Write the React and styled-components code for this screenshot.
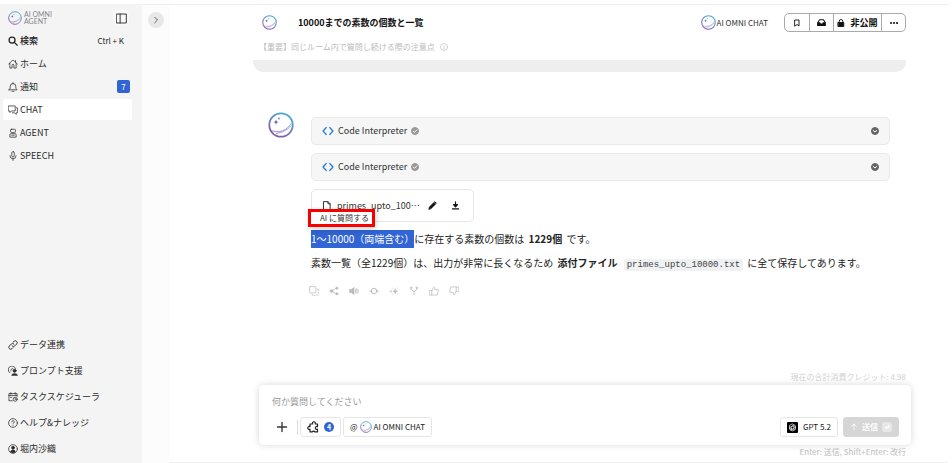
import { useId } from "react";
import styled, { createGlobalStyle } from "styled-components";

const GlobalStyle = createGlobalStyle`
  * {
    box-sizing: border-box;
  }

  body {
    margin: 0;
    background: #fff;
    color: #333;
    font-family: "Noto Sans CJK JP", sans-serif;
    font-size: 9px;
    line-height: 14px;
  }

  button,
  textarea {
    font: inherit;
    color: inherit;
  }

  svg {
    display: block;
    flex-shrink: 0;
  }
`;

const Shell = styled.div`
  display: flex;
  min-height: 100vh;
  padding: 4px 4px 0 0;
`;

/* Sidebar */

const Sidebar = styled.aside`
  display: flex;
  flex-direction: column;
  width: 142px;
  flex-shrink: 0;
  padding: 4px 10px 3px 3px;
  background: #f4f4f4;
`;

const SidebarTop = styled.div`
  display: flex;
  align-items: center;
  justify-content: space-between;
  height: 20px;
  padding: 0 3px 0 5px;
  margin-bottom: 2px;
`;

const Logo = styled.a`
  display: flex;
  align-items: center;
  gap: 2px;
  color: #85858f;
  font-family: Lato, sans-serif;
  font-size: 7px;
  line-height: 7px;
  text-decoration: none;
`;

const PlainButton = styled.button`
  display: flex;
  align-items: center;
  justify-content: center;
  padding: 0;
  border: 0;
  background: none;
  cursor: pointer;
`;

const CollapseButton = styled(PlainButton)`
  width: 16px;
  height: 16px;
  border-radius: 4px;
  background: #f8f8f8;
`;

const SearchButton = styled(PlainButton)`
  justify-content: flex-start;
  gap: 2px;
  height: 22px;
  margin-bottom: 1px;
  padding: 0 8px 0 5px;
  color: #222;
  font-weight: 500;
`;

const Shortcut = styled.span`
  margin-left: auto;
  font-size: 8px;
  font-weight: 400;
`;

const Nav = styled.nav`
  display: flex;
  flex-direction: column;
  gap: ${(props) => (props.$loose ? "4px" : "2px")};
  ${(props) => props.$loose && "margin-top: auto;"}
`;

const NavLink = styled.a`
  display: flex;
  align-items: center;
  gap: 2px;
  height: ${(props) => (props.$tall ? "22px" : "21px")};
  padding: 0 2px 0 5px;
  border-radius: 2px;
  background: ${(props) => (props.$active ? "#fff" : "transparent")};
  color: #2b2b2b;
  text-decoration: none;
`;

const Count = styled.span`
  width: 13px;
  height: 13px;
  margin-left: auto;
  border-radius: 2px;
  background: #3164d4;
  color: #fff;
  font-size: 8px;
  line-height: 13px;
  text-align: center;
`;

const Rail = styled.div`
  width: 28px;
  flex-shrink: 0;
  padding: 7px 6px;
  border-top: 1px solid #efefef;
  background: #fcfcfc;
`;

const RailButton = styled(PlainButton)`
  width: 16px;
  height: 16px;
  border-radius: 50%;
  background: #e8e8e8;
  color: #555;
`;

/* Main */

const Main = styled.main`
  display: flex;
  flex: 1;
  flex-direction: column;
  min-width: 0;
  padding: 0 37px 3px 83px;
  border-top: 1px solid #efefef;
  border-bottom: 1px solid #efefef;
`;

const Header = styled.header`
  display: flex;
  align-items: center;
  padding: 8px 5px 0 9px;
`;

const Title = styled.h1`
  margin: 0 auto 0 21px;
  color: #111;
  font-size: 9px;
  font-weight: 700;
`;

const AgentName = styled.span`
  display: flex;
  align-items: center;
  gap: 1px;
  margin-right: 16px;
  font-size: 8px;
`;

const Actions = styled.div`
  display: flex;
  height: 19px;
  border: 1px solid #aaa;
  border-radius: 5px;
`;

const Action = styled(PlainButton)`
  width: ${(props) => (props.$wide ? "48px" : "24px")};
  gap: 5px;
  color: #111;
  font-weight: 700;

  & + & {
    border-left: 1px solid #aaa;
  }
`;

const Notice = styled.p`
  display: flex;
  align-items: center;
  gap: 5px;
  margin: 8px 0 6px 6px;
  color: #bbb;
  font-size: 8px;
`;

const Strip = styled.div`
  height: 12px;
  margin-right: 5px;
  border-radius: 0 0 10px 10px;
  background: #eee;
`;

const Message = styled.article`
  display: flex;
  flex: 1;
  align-items: flex-start;
  gap: 17px;
  padding: 40px 21px 0 15px;
`;

const MessageBody = styled.div`
  display: flex;
  flex: 1;
  flex-direction: column;
  min-width: 0;
  padding-top: 5px;
`;

const Panel = styled.button`
  display: flex;
  align-items: center;
  gap: 4px;
  height: 28px;
  margin-bottom: 8px;
  padding: 0 10px;
  border: 1px solid #e9e9e9;
  border-radius: 5px;
  background: #f6f6f6;
  cursor: pointer;
`;

const PanelToggle = styled.span`
  margin-left: auto;
`;

const FileCard = styled.div`
  position: relative;
  display: flex;
  align-items: center;
  width: 163px;
  height: 33px;
  margin-bottom: 2px;
  padding: 0 13px 0 10px;
  border: 1px solid #e6e6e6;
  border-radius: 5px;
`;

const FileName = styled.span`
  margin: 0 auto 0 5px;
`;

const FileTools = styled.div`
  display: flex;
  gap: 13px;
`;

const FileButton = styled(PlainButton)`
  width: 10px;
  height: 10px;
  color: #111;
`;

const AskPopup = styled.button`
  position: absolute;
  top: 19px;
  left: -4px;
  width: 67px;
  height: 18px;
  padding: 0 0 0 6px;
  border: 3px solid #f60000;
  background: #fff;
  box-shadow: 1px 3px 6px rgba(0, 0, 0, 0.16);
  font-size: 8px;
  line-height: 12px;
  white-space: nowrap;
`;

const Answer = styled.p`
  margin: 6px 0 0;
  color: #222;
  font-size: 10px;
  line-height: 18px;

  mark {
    display: inline-block;
    background: #3164d4;
    color: #fff;
  }

  strong {
    margin: 0 2px;
  }

  code {
    margin: 0 2px;
    padding: 1px 3px;
    border-radius: 2px;
    background: #f0f1f3;
    color: #444;
    font-family: "Liberation Mono", monospace;
    font-size: 9px;
  }
`;

const Reactions = styled.div`
  display: flex;
  gap: 10px;
  margin: 12px 0 0 -2px;
  color: #bbb;
`;

const IconButton = styled(PlainButton)`
  width: 10px;
  height: 10px;
`;

/* Composer */

const Note = styled.p`
  margin: 0 5px 0 0;
  color: ${(props) => (props.$faint ? "#d2d2d2" : "#bbb")};
  font-size: 8px;
  line-height: ${(props) => (props.$faint ? "16px" : "14px")};
  text-align: right;
`;

const Composer = styled.form`
  display: flex;
  flex-direction: column;
  justify-content: space-between;
  height: 60px;
  margin-left: 6px;
  padding: 10px 12px 8px 13px;
  border-radius: 5px;
  background: #fff;
  box-shadow: 0 0 7px rgba(0, 0, 0, 0.16);
`;

const Prompt = styled.textarea`
  display: block;
  width: 100%;
  height: 14px;
  padding: 0;
  border: 0;
  outline: 0;
  resize: none;
  overflow: hidden;

  &::placeholder {
    color: #999;
  }
`;

const Tools = styled.div`
  display: flex;
  align-items: center;
  gap: 2px;
`;

const Divider = styled.span`
  width: 1px;
  height: 15px;
  margin-left: 3px;
  background: #ddd;
`;

const AddButton = styled(PlainButton)`
  width: 20px;
  height: 20px;
`;

const ToolButton = styled(PlainButton)`
  gap: 5px;
  height: 20px;
  padding: 0 6px;
  border: 1px solid #e6e6e6;
  border-radius: 3px;
  color: #222;
  font-size: 8px;
`;

const AgentButton = styled(ToolButton)`
  gap: 2px;
`;

const ModelButton = styled(ToolButton)`
  margin: 0 3px 0 auto;
`;

const ToolCount = styled.span`
  width: 10px;
  height: 10px;
  border-radius: 50%;
  background: #3164d4;
  color: #fff;
  font-size: 7px;
  font-weight: 700;
  line-height: 10px;
`;

const SendButton = styled(ToolButton)`
  gap: 4px;
  border-color: #d6d6d6;
  background: #d6d6d6;
  color: #fff;
  font-weight: 700;
`;

const Svg = ({ size = 10, view = 16, width = 1.2, children }) => (
  <svg
    width={size}
    height={size}
    viewBox={`0 0 ${view} ${view}`}
    fill="none"
    stroke="currentColor"
    strokeWidth={width}
    strokeLinecap="round"
    strokeLinejoin="round"
    aria-hidden="true"
  >
    {children}
  </svg>
);

const Orb = ({ size }) => {
  const id = useId();
  return (
    <svg width={size} height={size} viewBox="0 0 26 26" fill="none" aria-hidden="true">
      <defs>
        <linearGradient id={id} x1="20" y1="1" x2="8" y2="25" gradientUnits="userSpaceOnUse">
          <stop offset="0" stopColor="#35b6cf" />
          <stop offset="0.5" stopColor="#6c82bd" />
          <stop offset="1" stopColor="#8a58ad" />
        </linearGradient>
      </defs>
      <circle cx="13" cy="13" r="11.7" stroke={`url(#${id})`} strokeWidth="1.8" />
      <path d="M3 18.500c8 3 16 0 20-7M8 21.500c6-1 11-3 15-8" stroke={`url(#${id})`} strokeWidth="0.7" />
      <path d="M8 7.500l.7 1.900 1.900.7-1.900.7L8 12.700l-.7-1.900-1.900-.7 1.900-.7z" fill="#6657a8" />
      <circle cx="11" cy="6.500" r="0.9" fill="#4a9bc6" />
    </svg>
  );
};

const icons = {
  search: (
    <Svg width={2}>
      <circle cx="6.500" cy="6.500" r="4.800" />
      <path d="M10.200 10.200l4.500 4.500" />
    </Svg>
  ),
  home: (
    <Svg>
      <path d="M1 8l7-6.500L15 8M3 7v7.500h3.500V10a1.500 1.500 0 0 1 3 0v4.500H13V7M12 5V2.500" />
    </Svg>
  ),
  bell: (
    <Svg>
      <path d="M8 1v1.500M1.500 12.500h13L12.500 10V7a4.500 4.500 0 0 0-9 0v3zM6.500 14.800h3" />
    </Svg>
  ),
  chat: (
    <Svg>
      <path d="M1 1.500h10.500v8H5.500L3 12V9.500H1zM13.500 4.500H15v8h-2V15l-2.500-2.500H7" />
    </Svg>
  ),
  agent: (
    <Svg>
      <rect x="4" y="2" width="8" height="5" rx="1.500" />
      <path d="M3 14v-3a2 2 0 0 1 2-2h6a2 2 0 0 1 2 2v3zM6 11.500h4" />
    </Svg>
  ),
  mic: (
    <Svg>
      <rect x="6" y="1" width="4" height="8.500" rx="2" />
      <path d="M3 7.500a5 5 0 0 0 10 0M8 12.500V15" />
    </Svg>
  ),
  link: (
    <Svg width={1.5}>
      <path d="M6.500 9.500a3 3 0 0 0 4.300 0l3-3a3 3 0 0 0-4.300-4.300L8 3.700M9.500 6.500a3 3 0 0 0-4.300 0l-3 3a3 3 0 0 0 4.300 4.300L8 12.300" />
    </Svg>
  ),
  prompt: (
    <Svg>
      <path d="M3 11a6 6 0 1 1 9-7M4.500 8a3 3 0 0 1 3-4" />
      <circle cx="10.500" cy="7.500" r="2.500" fill="currentColor" />
      <path d="M6 14.500c0-3 9-3 9 0z" fill="currentColor" />
    </Svg>
  ),
  schedule: (
    <Svg>
      <path d="M7 14H1.500V2.500h13V7M1.500 5.500h13M4.500 1v2.500M11.500 1v2.500M4 8.500h2" />
      <circle cx="11.500" cy="11.500" r="3.300" />
      <path d="M11.500 9.800v2h1.500" />
    </Svg>
  ),
  help: (
    <Svg>
      <circle cx="8" cy="8" r="7" />
      <path d="M6 6.300a2 2 0 1 1 3 1.700c-.7.4-1 .8-1 1.500M8 11.700v.1" />
    </Svg>
  ),
  user: (
    <Svg>
      <circle cx="8" cy="8" r="7" />
      <circle cx="8" cy="6" r="2.300" fill="currentColor" />
      <path d="M4.500 12.500c0-4 7-4 7 0-2 2-5 2-7 0z" fill="currentColor" />
    </Svg>
  ),
  copy: (
    <Svg>
      <rect x="1" y="1" width="10" height="10" rx="1" />
      <path d="M13 5h2v2.500M15 10v2M15 14.500h-2.500M10 15H8M5.500 15H5v-2" />
    </Svg>
  ),
  share: (
    <Svg>
      <path d="M4 8l8-4.500M4 8l8 4.500" />
      <circle cx="4" cy="8" r="2.200" fill="currentColor" />
      <circle cx="12.500" cy="3.500" r="1.700" fill="currentColor" />
      <circle cx="12.500" cy="12.500" r="1.700" fill="currentColor" />
    </Svg>
  ),
  speaker: (
    <Svg>
      <path d="M1 5.500h2.500L8 2.500v11l-4.500-3H1z" fill="currentColor" />
      <path d="M10.500 5v6M12.500 4v8M14.500 5.500v5" />
    </Svg>
  ),
  refresh: (
    <Svg width={1.5}>
      <circle cx="8" cy="8" r="4.500" />
      <path d="M1.500 8h2l1.500 1.500M14.500 8h-2L11 6.500" />
    </Svg>
  ),
  sparkle: (
    <Svg>
      <path d="M10 5l1 2.500L13.500 8.500 11 9.500 10 12 9 9.500 6.500 8.500 9 7.500z" fill="currentColor" />
      <path d="M2 8.500h2M3 7.500v2M6 3.500h.1M14 3.500h.1M6 13h.1M14 13h.1" />
    </Svg>
  ),
  branch: (
    <Svg width={1.4}>
      <path d="M3.500 4v1.500L8 9l4.500-3.500V4M8 9v5" />
      <circle cx="3.500" cy="2.800" r="1.200" />
      <circle cx="12.500" cy="2.800" r="1.200" />
    </Svg>
  ),
  up: (
    <Svg>
      <path d="M1 7h3.500v7.500H1zM4.500 7.500L7.500 2c2.500-.5 2 2.500 1.500 4h6l-1.500 8.500h-9" />
    </Svg>
  ),
  down: (
    <Svg>
      <path d="M15 9h-3.500V1.500H15zM11.500 8.500L8.500 14c-2.500.5-2-2.500-1.500-4H1l1.500-8.500h9" />
    </Svg>
  ),
};

const mainLinks = [
  { icon: "home", label: "ホーム" },
  { icon: "bell", label: "通知", count: 7 },
  { icon: "chat", label: "CHAT", active: true },
  { icon: "agent", label: "AGENT" },
  { icon: "mic", label: "SPEECH" },
];

const bottomLinks = [
  { icon: "link", label: "データ連携" },
  { icon: "prompt", label: "プロンプト支援" },
  { icon: "schedule", label: "タスクスケジューラ" },
  { icon: "help", label: "ヘルプ&ナレッジ" },
  { icon: "user", label: "堀内沙織" },
];

const reactions = [
  ["copy", "コピー"],
  ["share", "共有"],
  ["speaker", "読み上げ"],
  ["refresh", "再生成"],
  ["sparkle", "改善"],
  ["branch", "分岐"],
  ["up", "良い"],
  ["down", "悪い"],
];

const CodePanel = () => (
  <Panel type="button">
    <Svg size={12} width={2}>
      <g stroke="#2d7fd6">
        <path d="M5.500 3.500L1.500 8l4 4.500M10.500 3.500l4 4.500-4 4.500" />
      </g>
    </Svg>
    Code Interpreter
    <Svg size={8} width={2}>
      <circle cx="8" cy="8" r="7" fill="#999" stroke="#999" />
      <path d="M4.500 8.200l2.500 2.300 4.500-4.500" stroke="#fff" />
    </Svg>
    <PanelToggle>
      <Svg size={8} width={2}>
        <circle cx="8" cy="8" r="7" fill="#666" stroke="#666" />
        <path d="M4.500 7L8 10l3.500-3" stroke="#fff" />
      </Svg>
    </PanelToggle>
  </Panel>
);

const App = () => {
  return (
    <>
      <GlobalStyle />
      <Shell>
        <Sidebar>
          <SidebarTop>
            <Logo href="#">
              <Orb size={14} />
              <span>
                AI OMNI
                <br />
                AGENT
              </span>
            </Logo>
            <CollapseButton aria-label="サイドバーを閉じる">
              <Svg size={11} width={1.4}>
                <rect x="1" y="1.500" width="14" height="13" />
                <path d="M6 1.500v13" />
              </Svg>
            </CollapseButton>
          </SidebarTop>
          <SearchButton>
            {icons.search}
            検索
            <Shortcut>Ctrl + K</Shortcut>
          </SearchButton>
          <Nav>
            {mainLinks.map((item) => (
              <NavLink href="#" key={item.label} $active={item.active}>
                {icons[item.icon]}
                {item.label}
                {item.count && <Count>{item.count}</Count>}
              </NavLink>
            ))}
          </Nav>
          <Nav $loose>
            {bottomLinks.map((item) => (
              <NavLink href="#" key={item.label} $tall>
                {icons[item.icon]}
                {item.label}
              </NavLink>
            ))}
          </Nav>
        </Sidebar>
        <Rail>
          <RailButton aria-label="履歴を開く">
            <Svg size={8} width={1.8}>
              <path d="M5.500 2.500L11 8l-5.500 5.500" />
            </Svg>
          </RailButton>
        </Rail>
        <Main>
          <Header>
            <Orb size={15} />
            <Title>10000までの素数の個数と一覧</Title>
            <AgentName>
              <Orb size={15} />
              AI OMNI CHAT
            </AgentName>
            <Actions>
              <Action aria-label="ブックマーク">
                <Svg size={8} width={1.8}>
                  <path d="M4 2h8v12l-4-3-4 3z" />
                </Svg>
              </Action>
              <Action aria-label="受信箱">
                <Svg size={9} width={1.8}>
                  <path d="M1.500 8l3-5h7l3 5v5.500h-13z" />
                  <path d="M1.500 8.500h3.500l1 2h4l1-2h3.500v5h-13z" fill="currentColor" />
                </Svg>
              </Action>
              <Action $wide>
                <Svg size={8} width={1.8}>
                  <rect x="2.500" y="7" width="11" height="8" fill="currentColor" />
                  <path d="M4.500 7V4.500a3.500 3.500 0 0 1 7 0V7" />
                </Svg>
                非公開
              </Action>
              <Action aria-label="その他">
                <Svg size={8} width={4}>
                  <path d="M2 8h.1M8 8h.1M14 8h.1" />
                </Svg>
              </Action>
            </Actions>
          </Header>
          <Notice>
            【重要】同じルーム内で質問し続ける際の注意点
            <Svg size={8}>
              <circle cx="8" cy="8" r="7" />
              <path d="M8 7.500V12M8 4.500v.1" />
            </Svg>
          </Notice>
          <Strip />
          <Message>
            <Orb size={26} />
            <MessageBody>
              <CodePanel />
              <CodePanel />
              <FileCard>
                <Svg size={10} width={1.6}>
                  <path d="M3 1h6.500L13 4.500V15H3zM9.500 1v3.500H13" />
                </Svg>
                <FileName lang="ja">primes_upto_100…</FileName>
                <FileTools>
                  <FileButton aria-label="編集">
                    <Svg size={9}>
                      <path d="M1.500 14.500l1-4L10 3l3 3-7.500 7.500zM11 2l1-1 3 3-1 1z" fill="currentColor" />
                    </Svg>
                  </FileButton>
                  <FileButton aria-label="ダウンロード">
                    <Svg size={9} width={2}>
                      <path d="M8 1.500v5M4.500 6.500h7L8 10.500z" fill="currentColor" />
                      <path d="M2.500 14h11" />
                    </Svg>
                  </FileButton>
                </FileTools>
                <AskPopup>AI に質問する</AskPopup>
              </FileCard>
              <Answer>
                <mark>1～10000（両端含む）</mark>に存在する素数の個数は <strong>1229個</strong> です。
              </Answer>
              <Answer>
                素数一覧（全1229個）は、出力が非常に長くなるため <strong>添付ファイル</strong>{" "}
                <code>primes_upto_10000.txt</code> に全て保存してあります。
              </Answer>
              <Reactions>
                {reactions.map(([icon, label]) => (
                  <IconButton key={icon} aria-label={label}>
                    {icons[icon]}
                  </IconButton>
                ))}
              </Reactions>
            </MessageBody>
          </Message>
          <Note $faint>現在の合計消費クレジット: 4.98</Note>
          <Composer>
            <Prompt rows={1} aria-label="質問" placeholder="何か質問してください" />
            <Tools>
              <AddButton type="button" aria-label="追加">
                <Svg size={12} width={1.8}>
                  <path d="M8 2v12M2 8h12" />
                </Svg>
              </AddButton>
              <Divider />
              <ToolButton type="button" aria-label="ツール">
                <Svg size={12} width={1.6}>
                  <path d="M5 4h2.500a2 2 0 1 1 3.500 0H14v3.500a2 2 0 1 0 0 3.500v3.500h-3.500a2 2 0 0 0-3.500 0H4V11a2 2 0 1 1 0-3.500V4z" />
                </Svg>
                <ToolCount>4</ToolCount>
              </ToolButton>
              <AgentButton type="button">
                @
                <Orb size={12} />
                AI OMNI CHAT
              </AgentButton>
              <ModelButton type="button">
                <Svg size={11} width={1}>
                  <rect x="0" y="0" width="16" height="16" rx="1.500" fill="#000" stroke="none" />
                  <g stroke="#fff">
                    <path d="M8 3l4.300 2.500v5L8 13l-4.300-2.500v-5z" />
                    <path d="M6 6.800v4.700M6 6.800L10.200 4.300M8 5.700l4.200 2.500M10 6.900v4.800M10 9.300l-4.200 2.500M8 10.400L3.800 8" />
                  </g>
                </Svg>
                GPT 5.2
              </ModelButton>
              <SendButton type="submit">
                <Svg size={8} width={1.6}>
                  <path d="M8 14V2M3.500 6.500L8 2l4.500 4.500" />
                </Svg>
                送信
                <Svg size={10} width={1.4}>
                  <rect x="1" y="1" width="14" height="14" rx="2" fill="#e8e8e8" stroke="#e8e8e8" />
                  <path d="M11 5v4H6M7.500 7L5.500 9l2 2" />
                </Svg>
              </SendButton>
            </Tools>
          </Composer>
          <Note>Enter: 送信, Shift+Enter: 改行</Note>
        </Main>
      </Shell>
    </>
  );
};

export default App;
